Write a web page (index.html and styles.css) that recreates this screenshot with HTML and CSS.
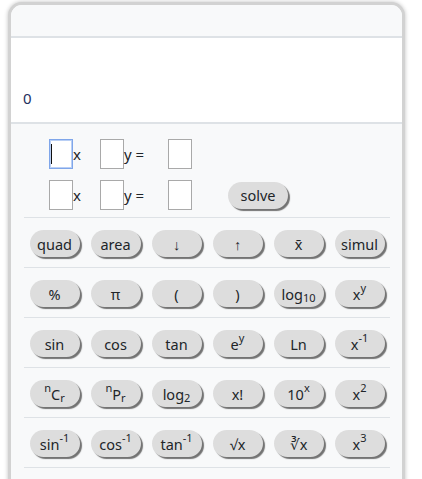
FILE: index.html
```html
<!DOCTYPE html>
<html lang="en">
<head>
<meta charset="utf-8">
<title>Calculator</title>
<link rel="stylesheet" href="styles.css">
</head>
<body>
<div class="card">
  <div class="card-header"></div>
  <div class="display"><span class="value">0</span></div>
  <div class="panel">
    <div class="simul">
      <div class="eq-row">
        <div class="cell"><input class="box caret" type="text"><span class="lbl">x</span></div>
        <div class="cell"><input class="box" type="text"><span class="lbl">y =</span></div>
        <div class="cell"><input class="box" type="text"></div>
      </div>
      <div class="eq-row">
        <div class="cell"><input class="box" type="text"><span class="lbl">x</span></div>
        <div class="cell"><input class="box" type="text"><span class="lbl">y =</span></div>
        <div class="cell"><input class="box" type="text"></div>
        <button class="key solve">solve</button>
      </div>
    </div>
    <div class="key-row">
      <button class="key">quad</button>
      <button class="key">area</button>
      <button class="key">↓</button>
      <button class="key">↑</button>
      <button class="key">x̄</button>
      <button class="key">simul</button>
    </div>
    <div class="key-row">
      <button class="key">%</button>
      <button class="key">π</button>
      <button class="key">(</button>
      <button class="key">)</button>
      <button class="key">log<sub>10</sub></button>
      <button class="key">x<sup>y</sup></button>
    </div>
    <div class="key-row">
      <button class="key">sin</button>
      <button class="key">cos</button>
      <button class="key">tan</button>
      <button class="key">e<sup>y</sup></button>
      <button class="key">Ln</button>
      <button class="key">x<sup>-1</sup></button>
    </div>
    <div class="key-row">
      <button class="key"><sup>n</sup>C<sub>r</sub></button>
      <button class="key"><sup>n</sup>P<sub>r</sub></button>
      <button class="key">log<sub>2</sub></button>
      <button class="key">x!</button>
      <button class="key">10<sup>x</sup></button>
      <button class="key">x<sup>2</sup></button>
    </div>
    <div class="key-row">
      <button class="key">sin<sup>-1</sup></button>
      <button class="key">cos<sup>-1</sup></button>
      <button class="key">tan<sup>-1</sup></button>
      <button class="key">√x</button>
      <button class="key">∛x</button>
      <button class="key">x<sup>3</sup></button>
    </div>
  </div>
</div>
</body>
</html>
```
FILE: styles.css
```css
html, body {
  margin: 0;
  padding: 0;
  background: #ffffff;
}

body {
  padding: 2px 0 0 8px;
  font-family: "Noto Sans", "Open Sans", sans-serif;
  color: #212529;
}

.card {
  width: 391px;
  border: 3px solid #d2d2d2;
  border-radius: 14px;
  box-shadow: 0 0 4px rgba(0, 0, 0, 0.25);
  overflow: hidden;
  background: #f8f9fa;
}

.card-header {
  height: 31px;
  background: #f8f9fa;
  border-bottom: 2px solid #dee2e6;
}

.display {
  height: 86px;
  background: #ffffff;
  border-bottom: 2px solid #dee2e6;
  display: flex;
  align-items: flex-end;
  padding: 0 12px 14px;
  box-sizing: border-box;
}

.value {
  font-size: 15px;
  line-height: 20px;
  color: #24305e;
}

.panel {
  background: #f8f9fa;
  padding: 0 12px 40px 13px;
}

.simul {
  padding: 15px 0 7px 25px;
  border-bottom: 1px solid #dee2e6;
  display: flex;
  flex-direction: column;
  gap: 11px;
}

.eq-row {
  display: grid;
  grid-template-columns: 51px 68px 60px auto;
  align-items: center;
}

.cell {
  display: flex;
  align-items: center;
}

.box {
  width: 24px;
  height: 30px;
  box-sizing: border-box;
  border: 1px solid #a9a9a9;
  background: #ffffff;
  padding: 0;
  margin: 0;
  outline: none;
}

.caret {
  border-color: #7fa6ea;
  box-shadow: 0 0 0 1px #b9cff5 inset;
  background: #ffffff linear-gradient(#111, #111) no-repeat 1px 4px / 1px 20px;
}

.lbl {
  font-size: 15px;
  line-height: 20px;
  color: #212529;
  white-space: pre;
}

.key {
  width: 50px;
  height: 27px;
  padding: 1px 0 0;
  margin: 0;
  border: none;
  border-radius: 14px;
  background: #dddddd;
  box-shadow: 2px 2px 1px #737373;
  font-family: "Noto Sans", "Open Sans", sans-serif;
  font-size: 14.5px;
  color: #212529;
  display: flex;
  align-items: center;
  justify-content: center;
  line-height: 1;
  box-sizing: border-box;
}

.solve {
  width: 60px;
}

.key-row {
  display: flex;
  justify-content: space-around;
  padding: 12px 0 10px;
  border-bottom: 1px solid #dee2e6;
}

.key sup,
.key sub {
  font-size: 11px;
  line-height: 0;
  position: relative;
  vertical-align: baseline;
}

.key sup {
  top: -6px;
}

.key sub {
  top: 4px;
}
```
